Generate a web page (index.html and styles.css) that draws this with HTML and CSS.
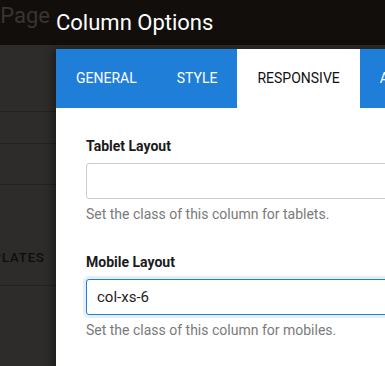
FILE: index.html
```html
<!DOCTYPE html>
<html lang="en">

<head>
  <meta charset="UTF-8" />
  <meta name="viewport" content="width=device-width, initial-scale=1.0" />
  <title>Column Options</title>
  <link rel="stylesheet" href="styles.css">
</head>

<body>
  <div class="page">
    <div class="topbar">
      <div class="pageTitle"><span>Edit Page</span></div>
    </div>
    <div class="sidebar">
      <div class="sideRow rowA"></div>
      <div class="sideRow rowB"></div>
      <div class="sideRow rowC"></div>
      <div class="sideRow rowD">
        <div class="sideLabel"><span>TEMPLATES</span></div>
      </div>
      <div class="sideRow rowE"></div>
    </div>
  </div>

  <div class="modal">
    <h2 class="modalTitle">Column Options</h2>
    <div class="panel">
      <ul class="tabs">
        <li class="tab">General</li>
        <li class="tab">Style</li>
        <li class="tab active">Responsive</li>
        <li class="tab">Advanced</li>
      </ul>
      <div class="tabBody">
        <div class="field">
          <label class="labelForm" for="tablet">Tablet Layout</label>
          <input class="inputText" type="text" id="tablet" value="" />
          <p class="help">Set the class of this column for tablets.</p>
        </div>
        <div class="field">
          <label class="labelForm" for="mobile">Mobile Layout</label>
          <input class="inputText focused" type="text" id="mobile" value="col-xs-6" />
          <p class="help">Set the class of this column for mobiles.</p>
        </div>
      </div>
    </div>
  </div>
</body>

</html>
```

FILE: styles.css
```css
html, body {
  margin: 0;
  height: 100%;
  overflow: hidden;
}

body {
  background: #2d2c2a;
  font-family: Roboto, 'Liberation Sans', sans-serif;
}

.topbar {
  height: 45px;
  background: #120e0b;
  display: flex;
  align-items: center;
}

.pageTitle {
  width: 50px;
  overflow: hidden;
  display: flex;
  justify-content: flex-end;
  white-space: nowrap;
  font-size: 22px;
  color: #363534;
  margin-top: -14px;
}

.sideRow {
  border-bottom: 1px solid #232220;
}

.rowA { height: 66px; }
.rowB { height: 31px; }
.rowC { height: 40px; }
.rowD {
  height: 100px;
  display: flex;
  align-items: flex-end;
}
.rowE { height: 80px; }

.sideLabel {
  width: 45px;
  overflow: hidden;
  display: flex;
  justify-content: flex-end;
  white-space: nowrap;
  font-size: 13px;
  font-weight: 500;
  letter-spacing: 1px;
  color: #0e0d0c;
  margin-bottom: 20px;
}

.modal {
  position: absolute;
  top: 0;
  left: 56px;
  width: 620px;
}

.modalTitle {
  margin: 0;
  height: 49px;
  line-height: 46px;
  font-size: 22px;
  font-weight: 400;
  color: #ffffff;
}

.panel {
  background: #ffffff;
  height: 400px;
  box-shadow: -4px 0 8px rgba(0, 0, 0, 0.35);
}

.tabs {
  list-style: none;
  margin: 0;
  padding: 0;
  display: flex;
  height: 59px;
  background: #1f7ed8;
}

.tab {
  padding: 0 20px;
  line-height: 59px;
  font-size: 14px;
  text-transform: uppercase;
  color: #ffffff;
}

.tab.active {
  background: #ffffff;
  color: #111111;
}

.tabBody {
  padding: 28px 30px 0 30px;
}

.field {
  margin-bottom: 30px;
}

.labelForm {
  display: block;
  font-size: 14px;
  font-weight: 700;
  line-height: 20px;
  color: #1a1a1a;
  margin-bottom: 7px;
}

.inputText {
  box-sizing: border-box;
  display: block;
  width: 100%;
  height: 36px;
  border: 1px solid #cccccc;
  border-radius: 3px;
  padding: 0 10px;
  font-family: Roboto, 'Liberation Sans', sans-serif;
  font-size: 15px;
  color: #222222;
  outline: none;
}

.inputText.focused {
  border-color: #1f7ed8;
  box-shadow: 0 0 0 3px rgba(31, 126, 216, 0.12);
}

.help {
  margin: 7px 0 0 0;
  font-size: 14px;
  line-height: 16px;
  color: #7a7a7a;
}
```
